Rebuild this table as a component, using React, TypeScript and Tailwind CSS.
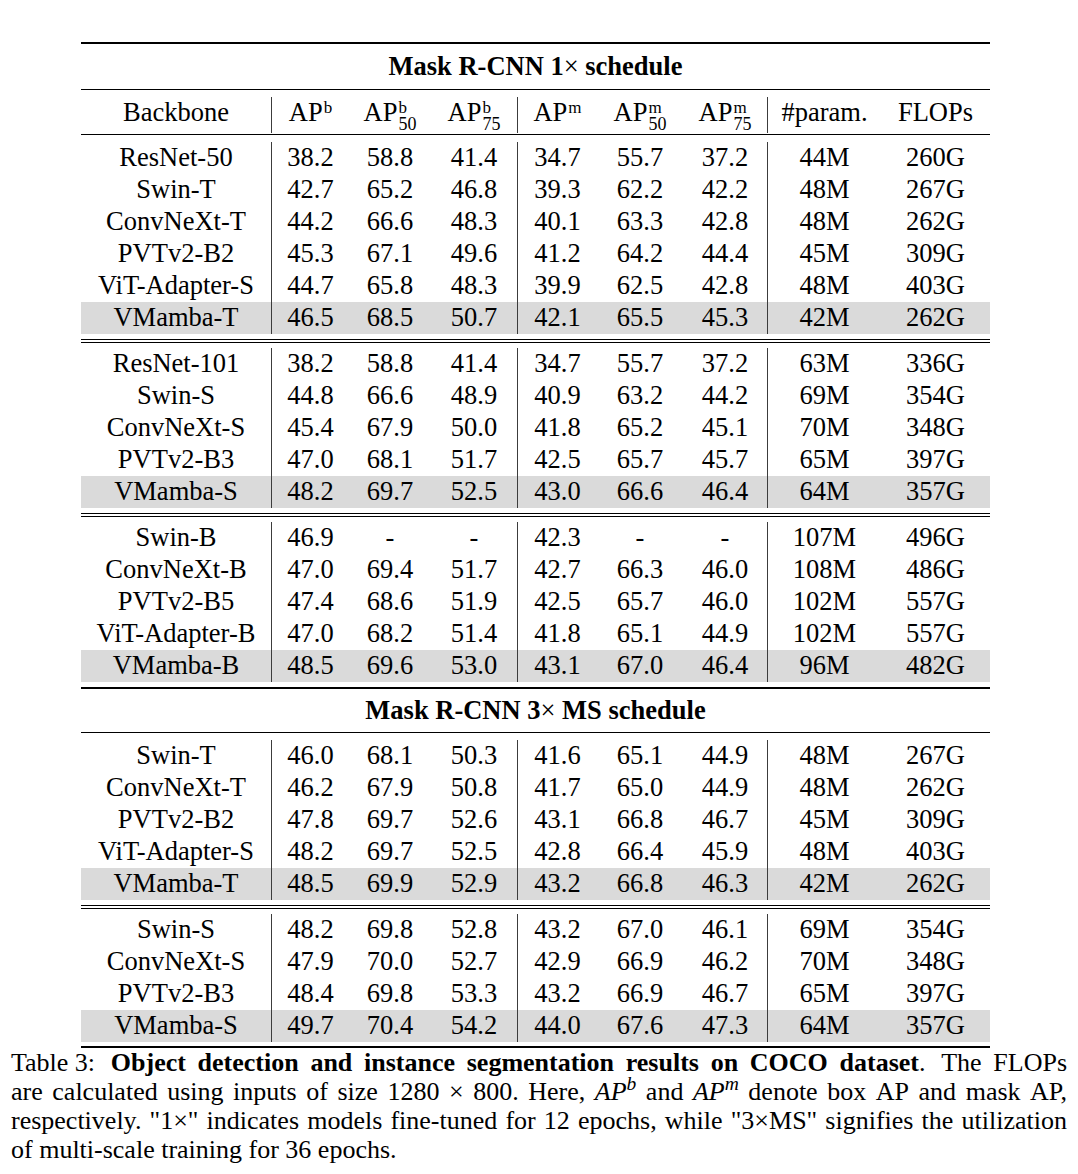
import React from "react";

type RowData = [string, string, string, string, string, string, string, string, string];

const g1: RowData[] = [
  ["ResNet-50", "38.2", "58.8", "41.4", "34.7", "55.7", "37.2", "44M", "260G"],
  ["Swin-T", "42.7", "65.2", "46.8", "39.3", "62.2", "42.2", "48M", "267G"],
  ["ConvNeXt-T", "44.2", "66.6", "48.3", "40.1", "63.3", "42.8", "48M", "262G"],
  ["PVTv2-B2", "45.3", "67.1", "49.6", "41.2", "64.2", "44.4", "45M", "309G"],
  ["ViT-Adapter-S", "44.7", "65.8", "48.3", "39.9", "62.5", "42.8", "48M", "403G"],
  ["VMamba-T", "46.5", "68.5", "50.7", "42.1", "65.5", "45.3", "42M", "262G"],
];
const g2: RowData[] = [
  ["ResNet-101", "38.2", "58.8", "41.4", "34.7", "55.7", "37.2", "63M", "336G"],
  ["Swin-S", "44.8", "66.6", "48.9", "40.9", "63.2", "44.2", "69M", "354G"],
  ["ConvNeXt-S", "45.4", "67.9", "50.0", "41.8", "65.2", "45.1", "70M", "348G"],
  ["PVTv2-B3", "47.0", "68.1", "51.7", "42.5", "65.7", "45.7", "65M", "397G"],
  ["VMamba-S", "48.2", "69.7", "52.5", "43.0", "66.6", "46.4", "64M", "357G"],
];
const g3: RowData[] = [
  ["Swin-B", "46.9", "-", "-", "42.3", "-", "-", "107M", "496G"],
  ["ConvNeXt-B", "47.0", "69.4", "51.7", "42.7", "66.3", "46.0", "108M", "486G"],
  ["PVTv2-B5", "47.4", "68.6", "51.9", "42.5", "65.7", "46.0", "102M", "557G"],
  ["ViT-Adapter-B", "47.0", "68.2", "51.4", "41.8", "65.1", "44.9", "102M", "557G"],
  ["VMamba-B", "48.5", "69.6", "53.0", "43.1", "67.0", "46.4", "96M", "482G"],
];
const g4: RowData[] = [
  ["Swin-T", "46.0", "68.1", "50.3", "41.6", "65.1", "44.9", "48M", "267G"],
  ["ConvNeXt-T", "46.2", "67.9", "50.8", "41.7", "65.0", "44.9", "48M", "262G"],
  ["PVTv2-B2", "47.8", "69.7", "52.6", "43.1", "66.8", "46.7", "45M", "309G"],
  ["ViT-Adapter-S", "48.2", "69.7", "52.5", "42.8", "66.4", "45.9", "48M", "403G"],
  ["VMamba-T", "48.5", "69.9", "52.9", "43.2", "66.8", "46.3", "42M", "262G"],
];
const g5: RowData[] = [
  ["Swin-S", "48.2", "69.8", "52.8", "43.2", "67.0", "46.1", "69M", "354G"],
  ["ConvNeXt-S", "47.9", "70.0", "52.7", "42.9", "66.9", "46.2", "70M", "348G"],
  ["PVTv2-B3", "48.4", "69.8", "53.3", "43.2", "66.9", "46.7", "65M", "397G"],
  ["VMamba-S", "49.7", "70.4", "54.2", "44.0", "67.6", "47.3", "64M", "357G"],
];

const GRID =
  "grid grid-cols-[190px_78px_82px_86px_80px_86px_84px_114px_109px]";

function cellClass(i: number) {
  return i === 1 || i === 4 || i === 7
    ? "text-center border-l border-[#3c3c3c] whitespace-nowrap"
    : "text-center whitespace-nowrap";
}

function Row({ data, hl }: { data: RowData; hl?: boolean }) {
  return (
    <div className={hl ? `${GRID} h-[32px] leading-[31px] bg-[#dadada]` : `${GRID} h-[32px] leading-[31px]`}>
      {data.map((c, i) => (
        <div key={i} className={cellClass(i)}>
          {c}
        </div>
      ))}
    </div>
  );
}

function Group({ rows }: { rows: RowData[] }) {
  return (
    <div className="flex flex-col">
      {rows.map((r, i) => (
        <Row key={i} data={r} hl={i === rows.length - 1} />
      ))}
    </div>
  );
}

function DoubleRule() {
  return (
    <div className="py-[5px]">
      <div className="h-[4px] border-y border-black" />
    </div>
  );
}

function AP({ sup, sub }: { sup: string; sub?: string }) {
  if (!sub) {
    return (
      <span>
        AP
        <span className="inline-block text-[17px] leading-[17px] align-[8px] ml-[1px]">{sup}</span>
      </span>
    );
  }
  return (
    <span>
      AP
      <span className="inline-flex flex-col items-start text-[17px] leading-[17px] align-[8px] ml-[1px]">
        <span className="leading-[17px]">{sup}</span>
        <span className="leading-[17px] text-[18px]">{sub}</span>
      </span>
    </span>
  );
}

function Header() {
  const cells: React.ReactNode[] = [
    "Backbone",
    <AP sup="b" />,
    <AP sup="b" sub="50" />,
    <AP sup="b" sub="75" />,
    <AP sup="m" />,
    <AP sup="m" sub="50" />,
    <AP sup="m" sub="75" />,
    "#param.",
    "FLOPs",
  ];
  return (
    <div className="pt-[7px] pb-[5px]">
      <div className={`${GRID} h-[32px] leading-[31px]`}>
        {cells.map((c, i) => (
          <div key={i} className={cellClass(i)}>
            {c}
          </div>
        ))}
      </div>
    </div>
  );
}

function Words({ text }: { text: string }) {
  return (
    <>
      {text.split(" ").map((w, i) => (
        <span key={i}>{w}</span>
      ))}
    </>
  );
}

export default function App() {
  return (
    <div className="bg-white text-black min-h-[1174px] w-[1078px] font-['Liberation_Serif','Times_New_Roman',serif] text-[26.5px]">
      <div className="pt-[42px] pl-[81px]">
        <div className="w-[909px] flex flex-col">
          <div className="h-[2px] bg-black" />
          <div className="h-[45px] leading-[45px] text-center font-bold">
            <span>
              Mask R-CNN 1<span className="font-normal">×</span> schedule
            </span>
          </div>
          <div className="h-px bg-black" />
          <Header />
          <div className="h-px bg-black" />
          <div className="h-[7px]" />
          <Group rows={g1} />
          <DoubleRule />
          <Group rows={g2} />
          <DoubleRule />
          <Group rows={g3} />
          <div className="h-[5px]" />
          <div className="h-[2px] bg-black" />
          <div className="h-[43px] leading-[43px] text-center font-bold">
            <span>
              Mask R-CNN 3<span className="font-normal">×</span> MS schedule
            </span>
          </div>
          <div className="h-px bg-black" />
          <div className="h-[7px]" />
          <Group rows={g4} />
          <DoubleRule />
          <Group rows={g5} />
          <div className="h-[4px]" />
          <div className="h-[2px] bg-black" />
        </div>
      </div>
      <div className="px-[11px] w-[1078px] leading-[29px] text-[26px]">
        <div className="whitespace-nowrap flex justify-between">
          <span className="mr-[4px]">Table 3:</span>
          <b>Object</b>
          <b>detection</b>
          <b>and</b>
          <b>instance</b>
          <b>segmentation</b>
          <b>results</b>
          <b>on</b>
          <b>COCO</b>
          <span className="mr-[4px]">
            <b>dataset</b>.
          </span>
          <span>The</span>
          <span>FLOPs</span>
        </div>
        <div className="whitespace-nowrap flex justify-between">
          <Words text="are calculated using inputs of size 1280" />
          <span>×</span>
          <Words text="800. Here," />
          <i>
            AP<sup>b</sup>
          </i>
          <span>and</span>
          <i>
            AP<sup>m</sup>
          </i>
          <Words text="denote box AP and mask AP," />
        </div>
        <div className="whitespace-nowrap flex justify-between">
          <Words text={'respectively. "1×" indicates models fine-tuned for 12 epochs, while "3×MS" signifies the utilization'} />
        </div>
        <div className="whitespace-nowrap">of multi-scale training for 36 epochs.</div>
      </div>
    </div>
  );
}
